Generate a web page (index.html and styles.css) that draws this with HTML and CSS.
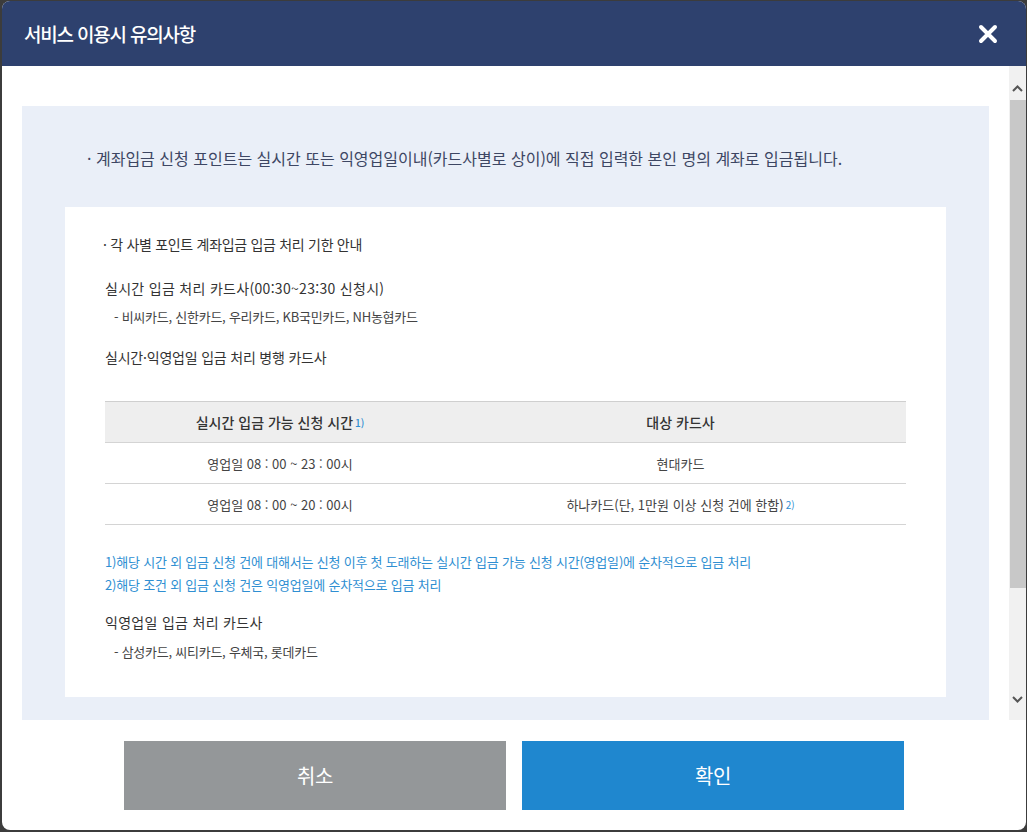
FILE: index.html
```html
<!DOCTYPE html>
<html lang="ko">
<head>
    <meta charset="UTF-8">
    <meta name="viewport" content="width=device-width, initial-scale=1.0">
    <title>서비스 이용시 유의사항</title>
    <link rel="stylesheet" href="styles.css">
</head>
<body>
    <div class="modal">
        <div class="modal-head">
            <h1>서비스 이용시 유의사항</h1>
            <button type="button" class="btn-close" aria-label="닫기">
                <svg width="20" height="20" viewBox="0 0 20 20">
                    <path d="M3 3 L17 17 M17 3 L3 17" stroke="#fff" stroke-width="4" stroke-linecap="round"/>
                </svg>
            </button>
        </div>

        <div class="modal-body">
            <div class="scroll-area">
                <div class="notice-box">
                    <p class="notice-lead">· 계좌입금 신청 포인트는 실시간 또는 익영업일이내(카드사별로 상이)에 직접 입력한 본인 명의 계좌로 입금됩니다.</p>

                    <div class="notice-inner">
                        <p class="sub-title">· 각 사별 포인트 계좌입금 입금 처리 기한 안내</p>

                        <p class="group-title">실시간 입금 처리 카드사(00:30~23:30 신청시)</p>
                        <p class="card-list">- 비씨카드, 신한카드, 우리카드, KB국민카드, NH농협카드</p>

                        <p class="group-title mt">실시간·익영업일 입금 처리 병행 카드사</p>

                        <table class="time-table">
                            <colgroup>
                                <col class="col-time">
                                <col>
                            </colgroup>
                            <thead>
                                <tr>
                                    <th>실시간 입금 가능 신청 시간<sup>1)</sup></th>
                                    <th>대상 카드사</th>
                                </tr>
                            </thead>
                            <tbody>
                                <tr>
                                    <td>영업일 08 : 00 ~ 23 : 00시</td>
                                    <td>현대카드</td>
                                </tr>
                                <tr>
                                    <td>영업일 08 : 00 ~ 20 : 00시</td>
                                    <td>하나카드(단, 1만원 이상 신청 건에 한함)<sup>2)</sup></td>
                                </tr>
                            </tbody>
                        </table>

                        <ul class="foot-notes">
                            <li>1)해당 시간 외 입금 신청 건에 대해서는 신청 이후 첫 도래하는 실시간 입금 가능 신청 시간(영업일)에 순차적으로 입금 처리</li>
                            <li>2)해당 조건 외 입금 신청 건은 익영업일에 순차적으로 입금 처리</li>
                        </ul>

                        <p class="group-title">익영업일 입금 처리 카드사</p>
                        <p class="card-list">- 삼성카드, 씨티카드, 우체국, 롯데카드</p>
                    </div>
                </div>
            </div>

            <div class="scrollbar">
                <span class="sb-btn sb-up">
                    <svg width="11" height="7" viewBox="0 0 11 7"><path d="M1 6 L5.5 1.5 L10 6" fill="none" stroke="#555" stroke-width="2"/></svg>
                </span>
                <span class="sb-track"><span class="sb-thumb"></span></span>
                <span class="sb-btn sb-down">
                    <svg width="11" height="7" viewBox="0 0 11 7"><path d="M1 1 L5.5 5.5 L10 1" fill="none" stroke="#555" stroke-width="2"/></svg>
                </span>
            </div>
        </div>

        <div class="modal-foot">
            <button type="button" class="btn btn-cancel">취소</button>
            <button type="button" class="btn btn-ok">확인</button>
        </div>
    </div>
</body>
</html>
```

FILE: styles.css
```css
body {
    margin: 0;
    padding: 1px 1px 2px 2px;
    background-color: #3c3c3c;
    font-family: "Noto Sans CJK KR", "Noto Sans", sans-serif;
}

.modal {
    width: 1024px;
    height: 829px;
    display: flex;
    flex-direction: column;
    background-color: #fff;
    border-radius: 8px;
    overflow: hidden;
}

/* header */
.modal-head {
    height: 65px;
    flex: none;
    display: flex;
    align-items: center;
    justify-content: space-between;
    padding: 0 28px 0 22px;
    background-color: #2e416e;
}

.modal-head h1 {
    margin: 0;
    color: #fff;
    font-size: 19px;
    font-weight: 500;
    letter-spacing: -1.2px;
}

.btn-close {
    display: flex;
    padding: 0;
    border: none;
    background: none;
    cursor: pointer;
}

/* body + fake scrollbar */
.modal-body {
    flex: 1;
    display: flex;
    min-height: 0;
}

.scroll-area {
    flex: 1;
    overflow: hidden;
    padding: 40px 20px 0;
}

.scrollbar {
    width: 17px;
    flex: none;
    display: flex;
    flex-direction: column;
    background-color: #f1f1f1;
}

.sb-btn {
    height: 34px;
    flex: none;
    display: flex;
    justify-content: center;
}

.sb-up {
    align-items: flex-end;
    padding-bottom: 8px;
    box-sizing: border-box;
}

.sb-down {
    align-items: flex-start;
    padding-top: 10px;
    box-sizing: border-box;
}

.sb-track {
    flex: 1;
    display: flex;
    flex-direction: column;
    padding-left: 1px;
}

.sb-thumb {
    height: 488px;
    background-color: #c8c8c8;
}

/* notice */
.notice-box {
    padding: 40px 43px;
    background-color: #eaeff8;
}

.notice-lead {
    margin: 0 0 37px 22px;
    font-size: 16px;
    line-height: 24px;
    letter-spacing: 0;
    color: #3d4663;
}

.notice-inner {
    padding: 25px 40px 35px;
    background-color: #fff;
    color: #333;
}

.notice-inner p {
    margin: 0;
}

.sub-title {
    font-size: 14px;
    line-height: 24px;
    letter-spacing: -0.3px;
    margin-left: -2px !important;
}

.group-title {
    margin-top: 20px !important;
    font-size: 14px;
    line-height: 24px;
    letter-spacing: 0.3px;
}

.group-title.mt {
    margin-top: 18px !important;
    letter-spacing: -0.2px;
}

.card-list {
    margin-top: 7px !important;
    padding-left: 9px;
    font-size: 13px;
    line-height: 20px;
    letter-spacing: -0.25px;
    color: #444;
}

/* table */
.time-table {
    width: 100%;
    margin-top: 32px;
    border-collapse: collapse;
    border-top: 1px solid #cfcfcf;
    font-size: 13px;
    letter-spacing: 0;
    color: #444;
}

.col-time {
    width: 350px;
}

.time-table th,
.time-table td {
    height: 40px;
    padding: 0;
    text-align: center;
    border-bottom: 1px solid #d4d4d4;
}

.time-table th {
    background-color: #eeeeee;
    font-size: 14px;
    font-weight: 500;
    letter-spacing: 0;
    color: #333;
}

.time-table sup {
    font-size: 10px;
    vertical-align: 1px;
    color: #2f8fd2;
    margin-left: 2px;
}

.foot-notes {
    list-style: none;
    margin: 25px 0 14px;
    padding: 0;
    font-size: 13px;
    line-height: 23px;
    letter-spacing: -0.2px;
    color: #2f8fd2;
}

.foot-notes + .group-title {
    margin-top: 0 !important;
}

.foot-notes + .group-title + .card-list {
    margin-top: 8px !important;
}

/* footer */
.modal-foot {
    height: 110px;
    flex: none;
    box-sizing: border-box;
    display: flex;
    justify-content: center;
    gap: 16px;
    padding-top: 21px;
}

.btn {
    width: 382px;
    height: 69px;
    border: none;
    color: #fff;
    font-family: inherit;
    font-size: 20px;
    letter-spacing: -0.5px;
    cursor: pointer;
}

.btn-cancel {
    background-color: #949799;
}

.btn-ok {
    background-color: #1f87cf;
}
```
